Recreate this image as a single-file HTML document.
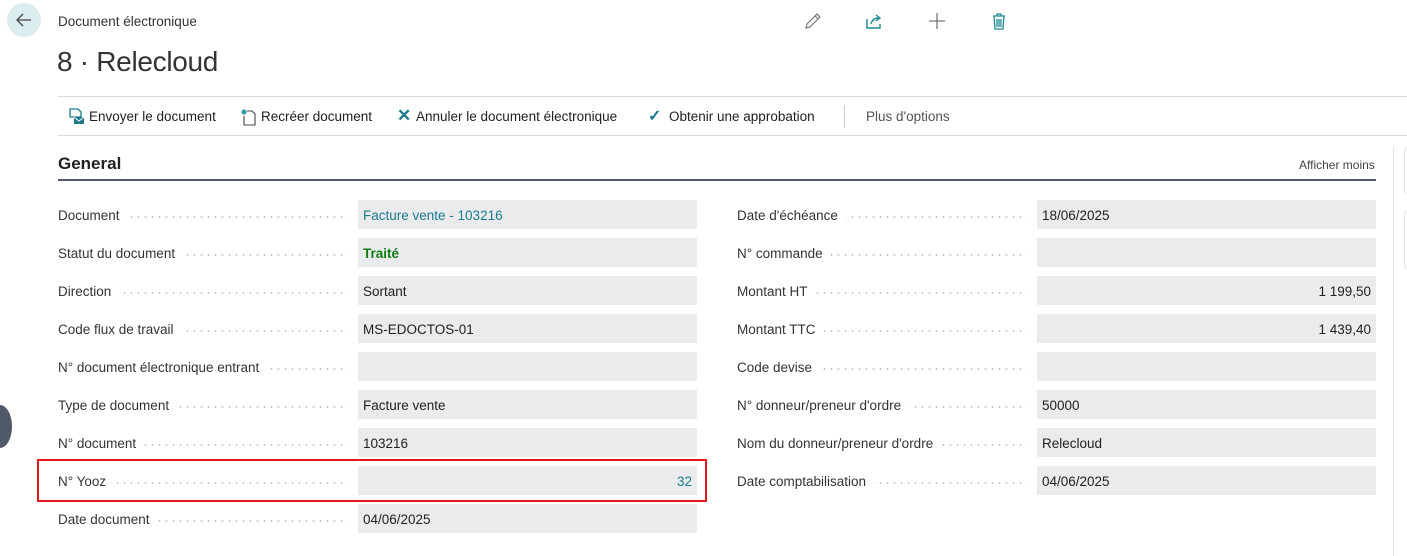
<!DOCTYPE html>
<html><head><meta charset="utf-8"><style>
*{box-sizing:border-box;margin:0;padding:0}
body{width:1407px;height:556px;overflow:hidden;background:#fff;font-family:"Segoe UI","Liberation Sans",sans-serif;color:#212121;position:relative;font-size:13.5px}
.abs{position:absolute}
.back{left:7px;top:3px;width:34px;height:34px;border-radius:50%;background:#dcedf0}
.crumb{left:58px;top:14px;font-size:13.5px;color:#333}
.title{left:57px;top:46px;font-size:28px;color:#333;font-weight:300;letter-spacing:-0.3px}
.hl{height:1px;background:#d8d8d8}
.act{top:109px;font-size:13.5px;color:#212121;white-space:nowrap}
.gen{left:58px;top:154px;font-size:17px;font-weight:bold;color:#212121}
.lab{position:absolute;white-space:nowrap;font-size:13.5px;color:#333;line-height:31px;height:29px;overflow:hidden;background-image:radial-gradient(circle,#c4c4c4 0.8px,transparent 1px);background-size:7px 2px;background-repeat:repeat-x;background-position:0 16px}
.lab span{background:#fff;padding-right:8px}
.box{position:absolute;height:29px;background:#eaebec;line-height:31px;padding:0 5px;font-size:13.5px;color:#212121;white-space:nowrap}
.teal{color:#1c7a8c}
.r{text-align:right}
</style></head><body>
<div class="abs back"><svg width="34" height="34" viewBox="0 0 34 34"><path d="M24 17H10M16 11l-6 6 6 6" stroke="#444" stroke-width="1.3" fill="none"/></svg></div>
<div class="abs crumb">Document électronique</div>
<div class="abs title">8 · Relecloud</div>
<svg class="abs" style="left:803px;top:11px" width="20" height="20" viewBox="0 0 20 20"><path d="M3 17l1-4L14 3l3 3L7 16z M12 5l3 3" stroke="#777" stroke-width="1.2" fill="none"/></svg>
<svg class="abs" style="left:864px;top:11px" width="20" height="20" viewBox="0 0 20 20"><path d="M3 8v9h13v-4 M7 13c1-4 4-6 8-6 M12 4l4 3-4 3" stroke="#1c8a95" stroke-width="1.4" fill="none"/></svg>
<svg class="abs" style="left:927px;top:11px" width="20" height="20" viewBox="0 0 20 20"><path d="M10 2v16M2 10h16" stroke="#777" stroke-width="1.3"/></svg>
<svg class="abs" style="left:989px;top:11px" width="20" height="20" viewBox="0 0 20 20"><path d="M4 5h12M8 5V3h4v2M5 5l1 13h8l1-13M8 8v8M10 8v8M12 8v8" stroke="#1c8a95" stroke-width="1.3" fill="none"/></svg>
<div class="abs hl" style="left:58px;top:96px;width:1349px"></div>
<div class="abs hl" style="left:58px;top:135px;width:1349px"></div>
<svg class="abs" style="left:68px;top:108px" width="18" height="18" viewBox="0 0 18 18"><path d="M2 1h8l3 3v5H2z" stroke="#1c7a8c" stroke-width="1.3" fill="none"/><rect x="6" y="9" width="10" height="7" fill="#1c7a8c"/><path d="M6 9l5 4 5-4" stroke="#fff" fill="none"/></svg>
<div class="abs act" style="left:89px">Envoyer le document</div>
<svg class="abs" style="left:241px;top:108px" width="16" height="18" viewBox="0 0 16 18"><path d="M6 3h5l3 3v11H3V8" stroke="#444" stroke-width="1.1" fill="none"/><path d="M3 1v6M0 4h6M1 2l4 4M5 2l-4 4" stroke="#1c8a95" stroke-width="1"/></svg>
<div class="abs act" style="left:261px">Recréer document</div>
<div class="abs act" style="left:397px;top:106px;color:#1c7a8c;font-size:17px;font-weight:bold">✕</div>
<div class="abs act" style="left:416px">Annuler le document électronique</div>
<div class="abs act" style="left:648px;top:106px;color:#1c7a8c;font-size:16px;font-weight:bold">✓</div>
<div class="abs act" style="left:669px">Obtenir une approbation</div>
<div class="abs" style="left:844px;top:105px;width:1px;height:23px;background:#ccc"></div>
<div class="abs act" style="left:866px;color:#555">Plus d'options</div>
<div class="abs gen">General</div>
<div class="abs" style="left:1299px;top:158px;font-size:12px;color:#444">Afficher moins</div>
<div class="abs" style="left:58px;top:179px;width:1318px;height:2px;background:#505a68"></div>
<div class="abs" style="left:1393px;top:147px;width:1px;height:409px;background:#e0e0e0"></div>
<div class="abs" style="left:1404px;top:147px;width:10px;height:47px;border:1px solid #e4e4e4;border-radius:4px"></div>
<div class="abs" style="left:1404px;top:210px;width:10px;height:60px;border:1px solid #e4e4e4;border-radius:4px"></div>
<div class="abs" style="left:-12px;top:405px;width:24px;height:43px;border-radius:50%;background:#4f5968"></div>

<div class="lab" style="left:58px;top:200px;width:290px"><span>Document</span></div><div class="box teal" style="left:358px;top:200px;width:339px">Facture vente - 103216</div>
<div class="lab" style="left:58px;top:238px;width:290px"><span>Statut du document</span></div><div class="box" style="left:358px;top:238px;width:339px;color:#107c10;font-weight:bold">Traité</div>
<div class="lab" style="left:58px;top:276px;width:290px"><span>Direction</span></div><div class="box" style="left:358px;top:276px;width:339px">Sortant</div>
<div class="lab" style="left:58px;top:314px;width:290px"><span>Code flux de travail</span></div><div class="box" style="left:358px;top:314px;width:339px">MS-EDOCTOS-01</div>
<div class="lab" style="left:58px;top:352px;width:290px"><span>N° document électronique entrant</span></div><div class="box" style="left:358px;top:352px;width:339px"></div>
<div class="lab" style="left:58px;top:390px;width:290px"><span>Type de document</span></div><div class="box" style="left:358px;top:390px;width:339px">Facture vente</div>
<div class="lab" style="left:58px;top:428px;width:290px"><span>N° document</span></div><div class="box" style="left:358px;top:428px;width:339px">103216</div>
<div class="lab" style="left:58px;top:466px;width:290px"><span>N° Yooz</span></div><div class="box teal r" style="left:358px;top:466px;width:339px">32</div>
<div class="lab" style="left:58px;top:504px;width:290px"><span>Date document</span></div><div class="box" style="left:358px;top:504px;width:339px">04/06/2025</div>
<div class="abs" style="left:37px;top:459px;width:670px;height:43px;border:2px solid #e0161c"></div>

<div class="lab" style="left:737px;top:200px;width:290px"><span>Date d'échéance</span></div><div class="box" style="left:1037px;top:200px;width:339px">18/06/2025</div>
<div class="lab" style="left:737px;top:238px;width:290px"><span>N° commande</span></div><div class="box" style="left:1037px;top:238px;width:339px"></div>
<div class="lab" style="left:737px;top:276px;width:290px"><span>Montant HT</span></div><div class="box r" style="left:1037px;top:276px;width:339px">1 199,50</div>
<div class="lab" style="left:737px;top:314px;width:290px"><span>Montant TTC</span></div><div class="box r" style="left:1037px;top:314px;width:339px">1 439,40</div>
<div class="lab" style="left:737px;top:352px;width:290px"><span>Code devise</span></div><div class="box" style="left:1037px;top:352px;width:339px"></div>
<div class="lab" style="left:737px;top:390px;width:290px"><span>N° donneur/preneur d'ordre</span></div><div class="box" style="left:1037px;top:390px;width:339px">50000</div>
<div class="lab" style="left:737px;top:428px;width:290px"><span>Nom du donneur/preneur d'ordre</span></div><div class="box" style="left:1037px;top:428px;width:339px">Relecloud</div>
<div class="lab" style="left:737px;top:466px;width:290px"><span>Date comptabilisation</span></div><div class="box" style="left:1037px;top:466px;width:339px">04/06/2025</div>
</body></html>
